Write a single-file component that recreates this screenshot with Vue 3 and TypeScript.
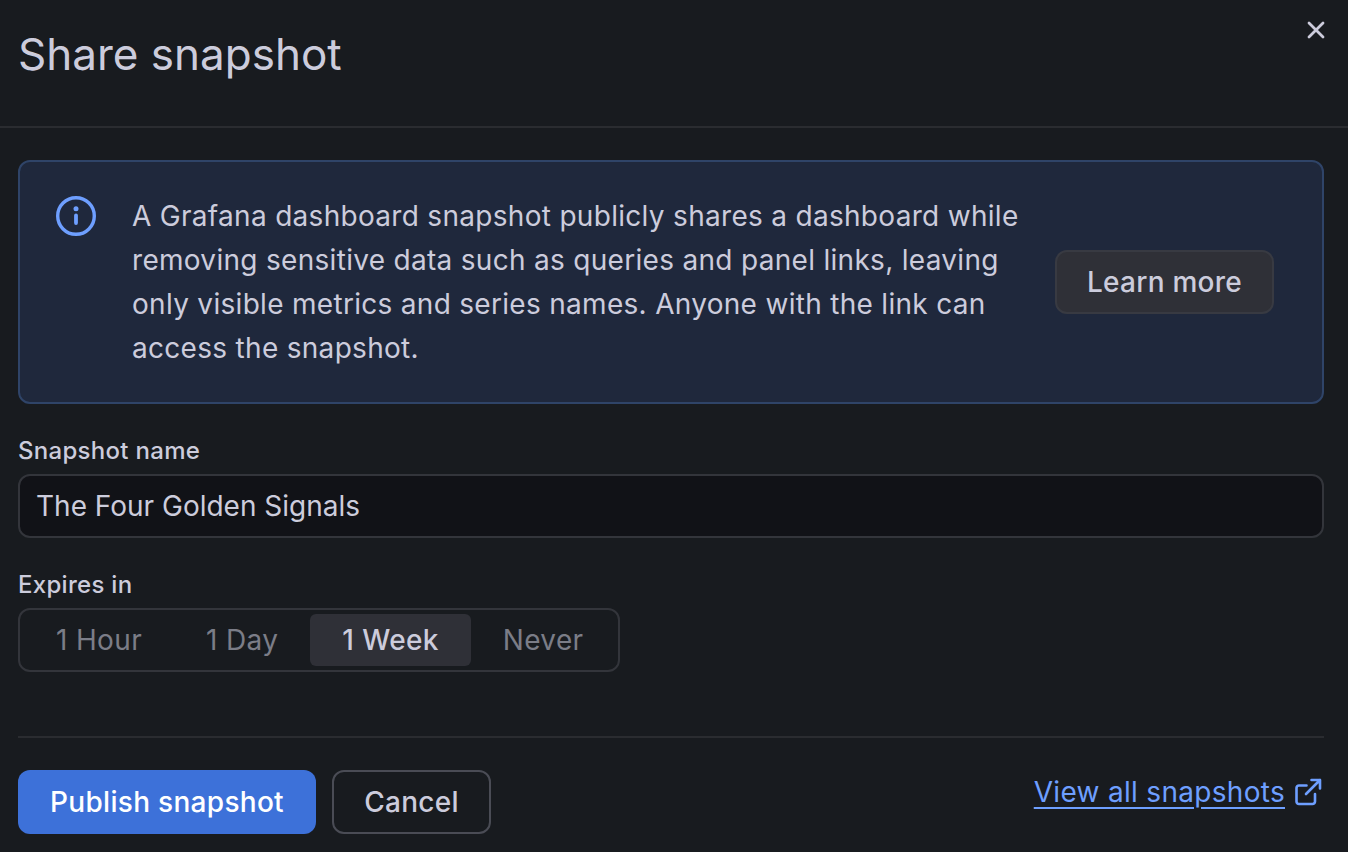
<script setup lang="ts">
import { ref } from 'vue'

const options = ['1 Hour', '1 Day', '1 Week', 'Never']
const selected = ref('1 Week')
</script>

<template>
  <div class="modal">
    <header class="head">
      <h1 class="title">Share snapshot</h1>
      <svg class="close" viewBox="0 0 24 24" aria-hidden="true">
        <path d="M5 5 19 19M19 5 5 19" />
      </svg>
    </header>
    <main class="body">
      <section class="alert">
        <svg class="info" viewBox="0 0 40 40" aria-hidden="true">
          <circle class="ring" cx="20" cy="20" r="18.3" />
          <circle class="dot" cx="20" cy="12.8" r="2.5" />
          <path class="stem" d="M20 19.500v7.500" />
        </svg>
        <p class="message">
          A Grafana dashboard snapshot publicly shares a dashboard while removing sensitive data such as queries and
          panel links, leaving only visible metrics and series names. Anyone with the link can access the snapshot.
        </p>
        <button class="learn" type="button">Learn more</button>
      </section>
      <label class="label name-label" for="snapshot-name">Snapshot name</label>
      <input id="snapshot-name" class="input" type="text" value="The Four Golden Signals" />
      <div class="label expires-label">Expires in</div>
      <div class="radio">
        <button
          v-for="option in options"
          :key="option"
          type="button"
          class="radio-item"
          :class="{ active: option === selected }"
          @click="selected = option"
        >
          {{ option }}
        </button>
      </div>
      <footer class="foot">
        <div class="actions">
          <button class="btn primary" type="button">Publish snapshot</button>
          <button class="btn ghost" type="button">Cancel</button>
        </div>
        <a class="link" href="#">
          <span class="link-text">View all snapshots</span>
          <svg class="external" viewBox="0 0 28 28" aria-hidden="true">
            <path d="M21 16v7.500a2.500 2.500 0 0 1-2.500 2.500H5a2.500 2.500 0 0 1-2.500-2.500V10A2.500 2.500 0 0 1 5 7.500h7.500" />
            <path d="M17.500 2H26v8.500M26 2 12 16" />
          </svg>
        </a>
      </footer>
    </main>
  </div>
</template>

<style scoped>
.modal {
  width: 1348px;
  height: 852px;
  box-sizing: border-box;
  background: #181b1f;
  color: #ccccdc;
  font-family: Inter, "Noto Sans", sans-serif;
  overflow: hidden;
}
.head {
  height: 128px;
  box-sizing: border-box;
  border-bottom: 2px solid #2a2c30;
  padding: 0 18px;
  position: relative;
}
.title {
  margin: 0;
  padding-top: 28px;
  font-size: 44px;
  line-height: 52px;
  font-weight: 400;
  color: #ccccdc;
}
.close {
  position: absolute;
  top: 18px;
  right: 20px;
  width: 24px;
  height: 24px;
  fill: none;
  stroke: #ccccdc;
  stroke-width: 2.800;
  stroke-linecap: round;
}
.body {
  padding: 32px 24px 0 18px;
}
.alert {
  height: 244px;
  box-sizing: border-box;
  display: flex;
  align-items: center;
  background: #1f283c;
  border: 2px solid #2f4468;
  border-radius: 12px;
  padding: 0 48px 0 36px;
}
.info {
  flex: none;
  width: 40px;
  height: 40px;
  align-self: flex-start;
  margin-top: 34px;
  margin-right: 36px;
}
.ring {
  fill: none;
  stroke: #6e9fff;
  stroke-width: 3.400;
}
.dot {
  fill: #6e9fff;
}
.stem {
  fill: none;
  stroke: #6e9fff;
  stroke-width: 3.800;
  stroke-linecap: round;
}
.message {
  margin: 0;
  flex: 1;
  font-size: 28px;
  line-height: 44px;
  font-weight: 400;
  letter-spacing: 0.3px;
  color: #ccccdc;
  padding-right: 32px;
}
.learn {
  flex: none;
  width: 219px;
  height: 64px;
  box-sizing: border-box;
  background: #2f3037;
  border: 2px solid #383a42;
  border-radius: 12px;
  color: #ccccdc;
  font-family: inherit;
  font-size: 28px;
  font-weight: 500;
  letter-spacing: 0.25px;
  padding: 0;
}
.label {
  display: block;
  font-size: 24px;
  line-height: 32px;
  font-weight: 500;
  letter-spacing: 0.3px;
  color: #ccccdc;
}
.name-label {
  margin-top: 31px;
  margin-bottom: 7px;
}
.input {
  display: block;
  width: 100%;
  height: 64px;
  box-sizing: border-box;
  background: #111217;
  border: 2px solid #33353b;
  border-radius: 12px;
  color: #ccccdc;
  font-family: inherit;
  font-size: 28px;
  letter-spacing: 0;
  padding: 0 16px;
  outline: none;
}
.expires-label {
  margin-top: 31px;
  margin-bottom: 7px;
}
.radio {
  display: flex;
  width: 602px;
  height: 64px;
  box-sizing: border-box;
  border: 2px solid #33353b;
  border-radius: 12px;
  padding: 4px;
  gap: 0;
}
.radio-item {
  height: 52px;
  border: 0;
  border-radius: 6px;
  background: transparent;
  color: #7b7d87;
  font-family: inherit;
  font-size: 28px;
  font-weight: 400;
  letter-spacing: 0.35px;
  padding: 0 32px;
  white-space: nowrap;
}
.radio-item.active {
  background: #2f3037;
  color: #ccccdc;
  font-weight: 500;
}
.foot {
  margin-top: 64px;
  border-top: 2px solid #2a2c30;
  padding-top: 32px;
  display: flex;
  justify-content: space-between;
  align-items: flex-start;
}
.actions {
  display: flex;
  gap: 16px;
}
.btn {
  height: 64px;
  box-sizing: border-box;
  border-radius: 12px;
  font-family: inherit;
  font-size: 28px;
  font-weight: 500;
  letter-spacing: 0.3px;
  padding: 0;
}
.primary {
  width: 298px;
  background: #3d71d9;
  border: 0;
  color: #fff;
}
.ghost {
  width: 159px;
  background: transparent;
  border: 2px solid #4a4c55;
  color: #ccccdc;
}
.link {
  display: flex;
  align-items: center;
  gap: 9px;
  color: #6e9fff;
  font-size: 28px;
  line-height: 44px;
  height: 44px;
  letter-spacing: 0.3px;
  padding-right: 2px;
  text-decoration: none;
}
.link-text {
  text-decoration: underline;
  text-decoration-thickness: 2px;
  text-underline-offset: 5px;
}
.external {
  width: 28px;
  height: 28px;
  fill: none;
  stroke: #6e9fff;
  stroke-width: 2.600;
  stroke-linecap: round;
  stroke-linejoin: round;
}
</style>
